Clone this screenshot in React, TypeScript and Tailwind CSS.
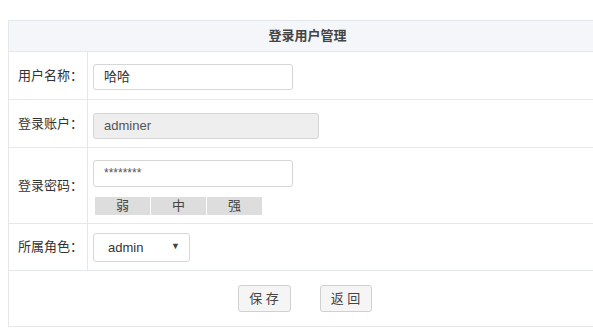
import React from "react";

const font = { fontFamily: '"Liberation Sans", "Noto Sans CJK SC", sans-serif' };

function Label({ children }: { children: React.ReactNode }) {
  return (
    <div className="w-[79px] shrink-0 border-r border-[#e4e7ec] flex items-center pl-[9px] text-[13px] text-[#333]">
      {children}
    </div>
  );
}

export default function App() {
  return (
    <div className="w-[593px] h-[328px] overflow-hidden bg-white" style={font}>
      <div className="ml-[8px] mt-[20px] w-[599px] border border-[#e4e7ec]">
        <div className="h-[31px] bg-[#f4f6f9] border-b border-[#e4e7ec] flex items-center justify-center text-[13px] font-bold text-[#444]">
          登录用户管理
        </div>
        <div className="flex h-[48px] border-b border-[#e4e7ec]">
          <Label>用户名称：</Label>
          <div className="pl-[5px] pt-[12px]">
            <div className="w-[200px] h-[26px] border border-[#d6d6d6] rounded-[3px] flex items-center pl-[10px] text-[13px] text-[#333]">
              哈哈
            </div>
          </div>
        </div>
        <div className="flex h-[48px] border-b border-[#e4e7ec]">
          <Label>登录账户：</Label>
          <div className="pl-[5px] pt-[13px]">
            <div className="w-[226px] h-[26px] border border-[#d6d6d6] rounded-[3px] bg-[#eeeeee] flex items-center pl-[10px] text-[13px] text-[#555]">
              adminer
            </div>
          </div>
        </div>
        <div className="flex h-[76px] border-b border-[#e4e7ec]">
          <Label>登录密码：</Label>
          <div className="pl-[5px] pt-[12px] flex flex-col">
            <div className="w-[200px] h-[27px] border border-[#d6d6d6] rounded-[3px] flex items-start pt-[6px] pl-[10px] text-[12px] text-[#555] leading-none">
              ********
            </div>
            <div className="flex gap-[1px] mt-[10px] ml-[2px]">
              <div className="w-[55px] h-[18px] bg-[#dddddd] flex items-center justify-center text-[13px] text-[#444]">弱</div>
              <div className="w-[55px] h-[18px] bg-[#dddddd] flex items-center justify-center text-[13px] text-[#444]">中</div>
              <div className="w-[55px] h-[18px] bg-[#dddddd] flex items-center justify-center text-[13px] text-[#444]">强</div>
            </div>
          </div>
        </div>
        <div className="flex h-[47px] border-b border-[#e4e7ec]">
          <Label>所属角色：</Label>
          <div className="pl-[5px] pt-[9px]">
            <div className="w-[97px] h-[29px] border border-[#d6d6d6] rounded-[3px] flex items-center pl-[14px] pr-[9px] text-[13px] text-[#333]">
              <span className="flex-1">admin</span>
              <span className="text-[9px] text-[#444] -mt-[2px]">▼</span>
            </div>
          </div>
        </div>
        <div className="h-[55px] flex justify-center items-start pt-[14px] gap-[29px] pr-[6px]">
          <div className="w-[53px] h-[27px] border border-[#d0d0d0] rounded-[3px] bg-[#f5f5f5] flex items-center justify-center text-[13px] text-[#444]">
            保 存
          </div>
          <div className="w-[52px] h-[27px] border border-[#d0d0d0] rounded-[3px] bg-[#f5f5f5] flex items-center justify-center text-[13px] text-[#444]">
            返 回
          </div>
        </div>
      </div>
    </div>
  );
}
